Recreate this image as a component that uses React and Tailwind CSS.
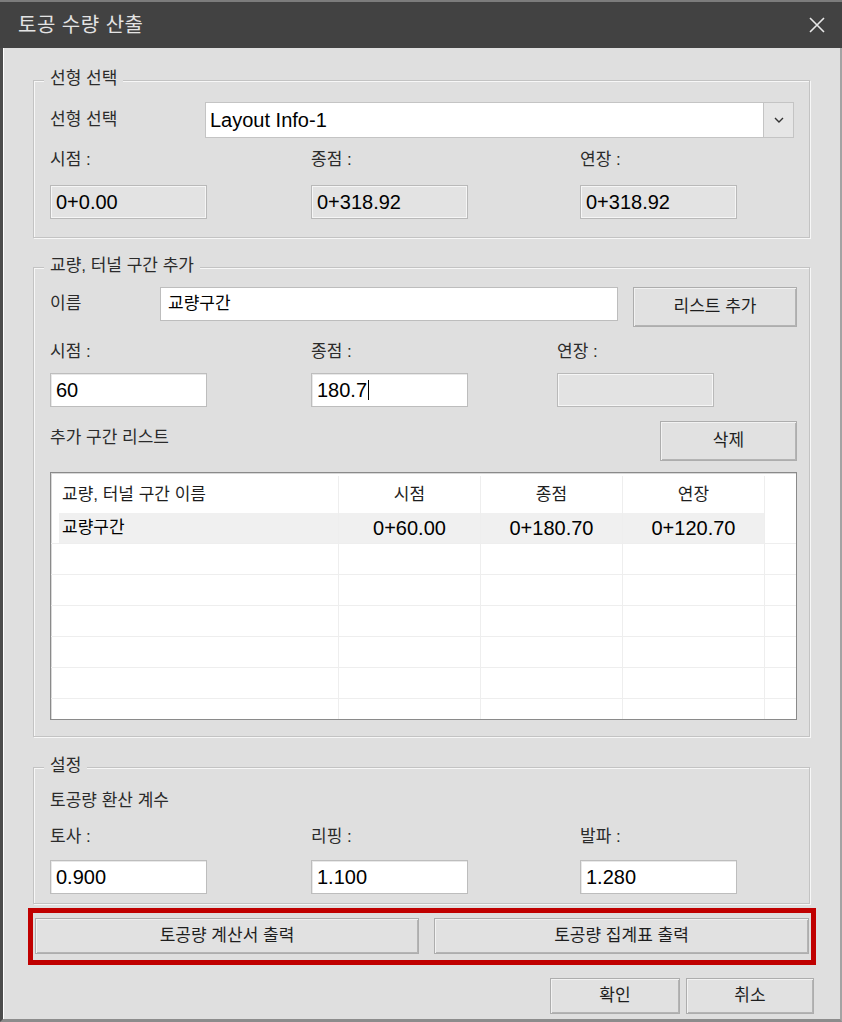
import React from 'react';

const FONT = { fontFamily: '"Liberation Sans", "Noto Sans CJK KR", sans-serif' };

function Group({ title, className = '', children }) {
  return (
    <div className={`relative ml-[30px] w-[777px] border border-[#c3c3c3] shadow-[inset_1px_1px_0_#f7f7f7,1px_1px_0_#f7f7f7] ${className}`}>
      <span className="absolute left-[10px] top-[-14px] bg-[#dfdfdf] px-[6px] text-[17px] leading-[24px] text-[#2b2b2b]">
        {title}
      </span>
      {children}
    </div>
  );
}

function Label({ children, className = '' }) {
  return <div className={`h-[22px] flex items-center text-[17px] text-[#2b2b2b] whitespace-nowrap ${className}`}>{children}</div>;
}

function Field({ value, readOnly = false, caret = false, w = 'w-[157px]', h = 'h-[34px]' }) {
  return (
    <div
      className={`${w} ${h} flex items-center pl-[5px] border ${
        readOnly
          ? 'bg-[#e3e3e3] border-[#b9b9b9] shadow-[inset_1px_1px_0_#f6f6f6,inset_-1px_-1px_0_#f6f6f6]'
          : 'bg-white border-[#bdbdbd] shadow-[inset_1px_1px_0_#e8e8e8]'
      }`}
    >
      <span className="text-[20px] leading-none text-black">{value}</span>
      {caret && <span className="ml-[1px] inline-block w-px h-[20px] bg-black" />}
    </div>
  );
}

function Btn({ children, className = '' }) {
  return (
    <button className={`flex items-center justify-center bg-[#e1e1e1] border border-[#adadad] shadow-[inset_1px_1px_0_#f2f2f2,inset_-1px_-1px_0_#b4b4b4] text-[17px] text-[#1e1e1e] ${className}`}>
      {children}
    </button>
  );
}

const COLS = ['w-[142px]', 'w-[142px]', 'w-[142px]'];

function ListRow({ cells, selected }) {
  return (
    <div className="flex h-[31px] border-b border-[#eeeeee]">
      <div className="w-[288px] flex items-center border-r border-[#eeeeee]">
        <div className={`ml-[8px] h-full flex-1 flex items-center pl-[3px] text-[17px] text-black ${selected ? 'bg-[#f0f0f0]' : ''}`}>
          {cells && cells[0]}
        </div>
      </div>
      {COLS.map((c, i) => (
        <div key={i} className={`${c} flex items-center justify-center border-r border-[#eeeeee] text-[20px] text-black ${selected ? 'bg-[#f0f0f0]' : ''}`}>
          {cells && cells[i + 1]}
        </div>
      ))}
      <div className="flex-1" />
    </div>
  );
}

export default function App() {
  return (
    <div className="w-[842px] h-[1022px] border-t-2 border-[#7c7c7c] flex flex-col" style={FONT}>
      {/* Title bar */}
      <div className="h-[46px] bg-[#424242] flex items-center justify-between pl-[18px] pr-[16px]">
        <span className="text-[20px] text-[#e4e4e4] tracking-[0.5px]">토공 수량 산출</span>
        <svg width="18" height="18" viewBox="0 0 18 18" fill="none" stroke="#e8e8e8" strokeWidth="1.6">
          <path d="M2 2l14 14M16 2L2 16" />
        </svg>
      </div>

      {/* Body */}
      <div className="flex-1 flex flex-col bg-[#dfdfdf] border-l-[3px] border-l-[#4c4c4c] border-r-2 border-r-[#a3a3a3] border-b-[3px] border-b-[#8c8c8c] shadow-[inset_1px_0_0_#ffffff]">
        {/* 선형 선택 */}
        <Group title="선형 선택" className="mt-[32px] pt-[21px] pl-[16px] pr-[15px] pb-[18px]">
          <div className="flex items-center h-[36px]">
            <Label className="w-[155px]">선형 선택</Label>
            <div className="flex-1 h-[36px] flex border border-[#c4c4c4] bg-white">
              <div className="flex-1 flex items-center pl-[4px] text-[20px] text-black">Layout Info-1</div>
              <div className="w-[30px] flex items-center justify-center bg-[#e6e6e6] border-l border-[#c4c4c4]">
                <svg width="14" height="14" viewBox="0 0 14 14" fill="none" stroke="#333" strokeWidth="1.4">
                  <path d="M3 5l4 4 4-4" />
                </svg>
              </div>
            </div>
          </div>
          <div className="grid grid-cols-[261px_269px_1fr] mt-[11px]">
            <Label>시점 :</Label>
            <Label>종점 :</Label>
            <Label>연장 :</Label>
          </div>
          <div className="grid grid-cols-[261px_269px_1fr] mt-[14px]">
            <Field value="0+0.00" readOnly />
            <Field value="0+318.92" readOnly />
            <Field value="0+318.92" readOnly />
          </div>
        </Group>

        {/* 교량, 터널 구간 추가 */}
        <Group title="교량, 터널 구간 추가" className="mt-[29px] pt-[19px] pl-[16px] pb-[16px]">
          <div className="flex items-start">
            <div className="w-[110px] h-[34px] flex items-center text-[17px] text-[#2b2b2b]">이름</div>
            <div className="w-[458px] h-[34px] flex items-center pl-[7px] bg-white border border-[#bdbdbd] text-[17px] text-black">
              교량구간
            </div>
            <Btn className="ml-[15px] w-[164px] h-[40px]">리스트 추가</Btn>
          </div>
          <div className="grid grid-cols-[261px_246px_1fr] mt-[14px]">
            <Label>시점 :</Label>
            <Label>종점 :</Label>
            <Label>연장 :</Label>
          </div>
          <div className="grid grid-cols-[261px_246px_1fr] mt-[10px]">
            <Field value="60" />
            <Field value="180.7" caret />
            <Field value="" readOnly />
          </div>
          <div className="flex items-center justify-between w-[747px] h-[40px] mt-[14px]">
            <Label className="-mt-[6px]">추가 구간 리스트</Label>
            <Btn className="w-[137px] h-[40px]">삭제</Btn>
          </div>
          <div className="mt-[11px] w-[747px] h-[248px] bg-white border border-[#8a8a8a] shadow-[inset_1px_1px_0_#d8d8d8] overflow-hidden">
            <div className="flex h-[40px] pt-[3px]">
              <div className="w-[288px] flex items-center pl-[11px] text-[17px] text-[#1e1e1e] border-r border-[#eeeeee]">
                교량, 터널 구간 이름
              </div>
              <div className="w-[142px] flex items-center justify-center text-[17px] text-[#1e1e1e] border-r border-[#eeeeee]">시점</div>
              <div className="w-[142px] flex items-center justify-center text-[17px] text-[#1e1e1e] border-r border-[#eeeeee]">종점</div>
              <div className="w-[142px] flex items-center justify-center text-[17px] text-[#1e1e1e] border-r border-[#eeeeee]">연장</div>
            </div>
            <ListRow cells={['교량구간', '0+60.00', '0+180.70', '0+120.70']} selected />
            <ListRow />
            <ListRow />
            <ListRow />
            <ListRow />
            <ListRow />
            <ListRow />
          </div>
        </Group>

        {/* 설정 */}
        <Group title="설정" className="mt-[30px] pt-[22px] pl-[16px] pb-[9px]">
          <Label>토공량 환산 계수</Label>
          <div className="grid grid-cols-[261px_269px_1fr] mt-[14px]">
            <Label>토사 :</Label>
            <Label>리핑 :</Label>
            <Label>발파 :</Label>
          </div>
          <div className="grid grid-cols-[261px_269px_1fr] mt-[12px]">
            <Field value="0.900" />
            <Field value="1.100" />
            <Field value="1.280" />
          </div>
        </Group>

        {/* 출력 버튼 */}
        <div className="ml-[25px] mt-[4px] w-[788px] h-[57px] border-[5px] border-[#c00000] flex items-start pt-[5px] pl-[2px]">
          <Btn className="w-[384px] h-[36px]">토공량 계산서 출력</Btn>
          <Btn className="ml-[15px] w-[375px] h-[36px]">토공량 집계표 출력</Btn>
        </div>

        <div className="flex justify-end gap-[6px] mt-[13px] mr-[26px]">
          <Btn className="w-[130px] h-[36px]">확인</Btn>
          <Btn className="w-[128px] h-[36px]">취소</Btn>
        </div>
      </div>
    </div>
  );
}
